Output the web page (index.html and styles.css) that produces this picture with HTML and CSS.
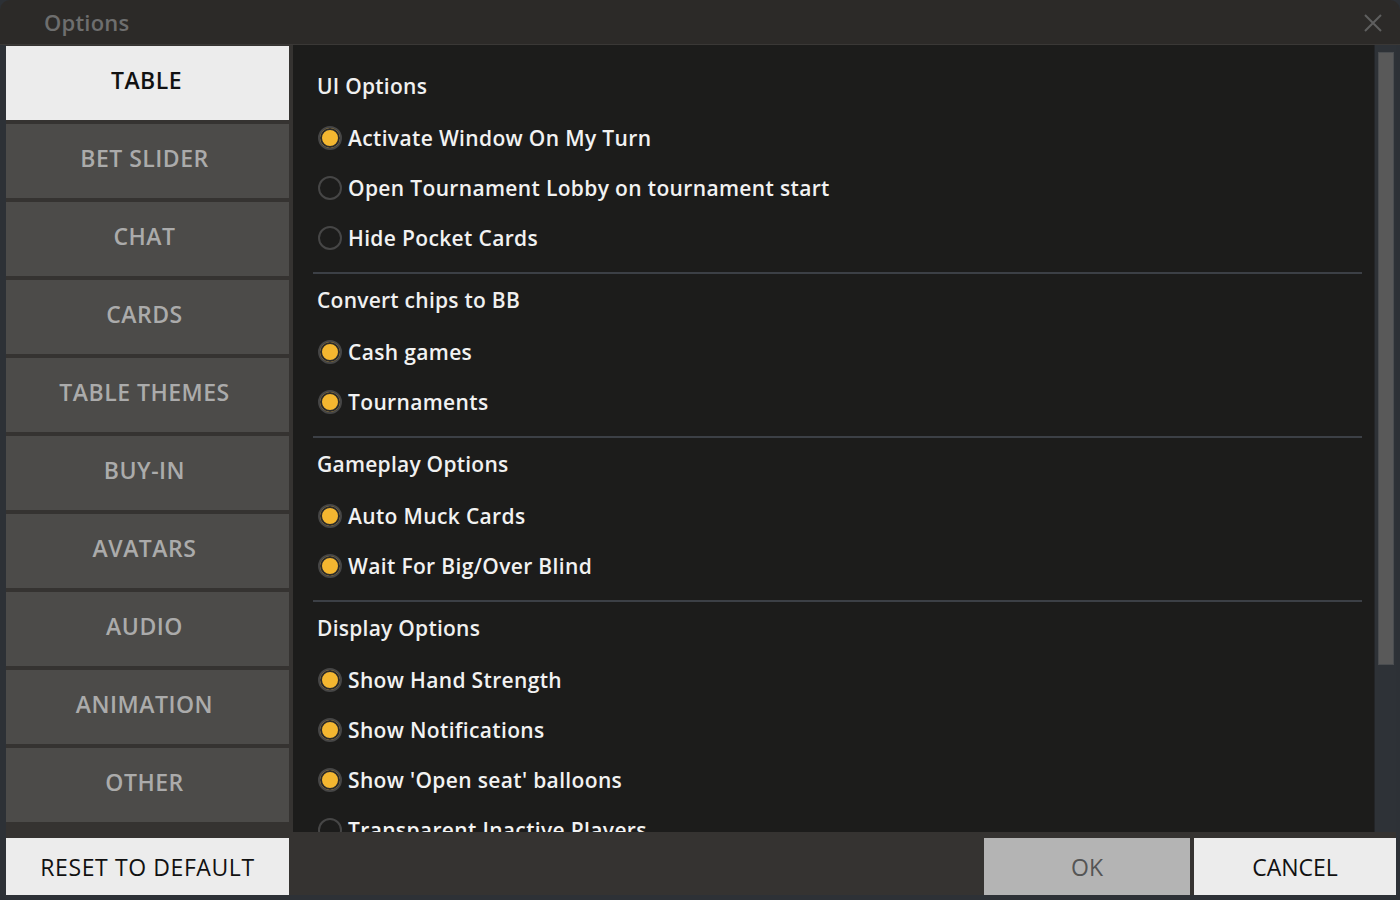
FILE: index.html
```html
<!DOCTYPE html>
<html lang="en">
<head>
  <meta charset="UTF-8" />
  <title>Options</title>
  <link rel="stylesheet" href="styles.css">
</head>
<body>
  <div class="window">
    <div class="titlebar">
      <span class="title">Options</span>
      <svg class="close" width="20" height="20" viewBox="0 0 20 20">
        <path d="M2 2 L18 18 M18 2 L2 18" stroke="#5f5f5f" stroke-width="2" fill="none" />
      </svg>
    </div>

    <div class="panel">
      <div class="top">
        <nav class="sidebar">
          <a class="tab active">TABLE</a>
          <a class="tab">BET SLIDER</a>
          <a class="tab">CHAT</a>
          <a class="tab">CARDS</a>
          <a class="tab">TABLE THEMES</a>
          <a class="tab">BUY-IN</a>
          <a class="tab">AVATARS</a>
          <a class="tab">AUDIO</a>
          <a class="tab">ANIMATION</a>
          <a class="tab">OTHER</a>
        </nav>

        <main class="content">
          <section class="group">
            <h2>UI Options</h2>
            <label class="opt"><span class="radio on"></span>Activate Window On My Turn</label>
            <label class="opt"><span class="radio"></span>Open Tournament Lobby on tournament start</label>
            <label class="opt"><span class="radio"></span>Hide Pocket Cards</label>
          </section>
          <hr />
          <section class="group">
            <h2>Convert chips to BB</h2>
            <label class="opt"><span class="radio on"></span>Cash games</label>
            <label class="opt"><span class="radio on"></span>Tournaments</label>
          </section>
          <hr />
          <section class="group">
            <h2>Gameplay Options</h2>
            <label class="opt"><span class="radio on"></span>Auto Muck Cards</label>
            <label class="opt"><span class="radio on"></span>Wait For Big/Over Blind</label>
          </section>
          <hr />
          <section class="group">
            <h2>Display Options</h2>
            <label class="opt"><span class="radio on"></span>Show Hand Strength</label>
            <label class="opt"><span class="radio on"></span>Show Notifications</label>
            <label class="opt"><span class="radio on"></span>Show 'Open seat' balloons</label>
            <label class="opt"><span class="radio"></span>Transparent Inactive Players</label>
          </section>
        </main>

        <div class="scrollbar"><div class="thumb"></div></div>
      </div>

      <div class="footer">
        <button class="btn light reset">RESET TO DEFAULT</button>
        <div class="spacer"></div>
        <button class="btn ok">OK</button>
        <button class="btn light cancel">CANCEL</button>
      </div>
    </div>
  </div>
</body>
</html>
```

FILE: styles.css
```css
body {
  margin: 0;
  background-color: #2c3035;
  font-family: "Open Sans", "DejaVu Sans", sans-serif;
}

.window {
  width: 1400px;
  height: 900px;
  border-radius: 10px;
  overflow: hidden;
  background-color: #2d3136;
  display: flex;
  flex-direction: column;
}

.titlebar {
  height: 44px;
  border-bottom: 1px solid #3a3836;
  background-color: #2c2a28;
  display: flex;
  align-items: center;
  justify-content: space-between;
  padding: 0 17px 0 44px;
}

.title {
  color: #6e6e6e;
  font-size: 22px;
  font-weight: 600;
  letter-spacing: 0.2px;
}

.close {
  margin-top: 1px;
}

.panel {
  flex: 1;
  margin: 0 4px 5px 6px;
  background-color: #353331;
  display: flex;
  flex-direction: column;
  min-height: 0;
}

.top {
  display: flex;
  height: 787px;
}

.sidebar {
  width: 283px;
  padding-top: 1px;
  display: flex;
  flex-direction: column;
  gap: 4px;
  margin-right: 4px;
}

.tab {
  height: 74px;
  box-sizing: border-box;
  padding: 0 6px 6px 0;
  background-color: #4c4b49;
  color: #ababab;
  font-size: 23px;
  font-weight: 600;
  letter-spacing: 0.5px;
  display: flex;
  align-items: center;
  justify-content: center;
}

.tab.active {
  background-color: #ececec;
  color: #111;
  padding-right: 2px;
}

.content {
  flex: 1;
  background-color: #1c1c1b;
  padding: 26px 12px 0 24px;
  overflow: hidden;
}

.group h2 {
  margin: 0 0 12px 0;
  height: 30px;
  line-height: 30px;
  font-size: 21px;
  font-weight: 600;
  letter-spacing: 0.25px;
  color: #f0f0f0;
}

.opt {
  height: 50px;
  display: flex;
  align-items: center;
  gap: 6px;
  color: #f2f2f2;
  font-size: 21px;
  font-weight: 600;
  letter-spacing: 0.35px;
}

.radio {
  width: 20px;
  height: 20px;
  margin-left: 1px;
  border-radius: 50%;
  border: 2px solid #464646;
  background-color: #1c1c1b;
  box-sizing: content-box;
}

.radio.on {
  background-color: #f4b730;
  box-shadow: inset 0 0 0 2px #2a2a2a;
}

.content hr {
  margin: 9px 0 11px -4px;
  border: none;
  height: 2px;
  background-color: #3c4046;
}

.scrollbar {
  width: 22px;
  background-color: #2e3237;
  border-left: 1px solid #232528;
  box-sizing: border-box;
  padding: 7px 2px 0 3px;
}

.thumb {
  height: 611px;
  background-color: #595959;
  border: 1px solid #4a4d50;
}

.footer {
  flex: 1;
  display: flex;
  align-items: flex-end;
  padding-top: 6px;
}

.btn {
  height: 57px;
  border: none;
  font-family: inherit;
  font-size: 23px;
  font-weight: 500;
  padding: 0;
}

.btn.light {
  background-color: #ececec;
  color: #111;
}

.reset {
  width: 283px;
  letter-spacing: 0.6px;
}

.spacer {
  flex: 1;
}

.ok {
  width: 206px;
  margin-right: 4px;
  background-color: #b4b4b4;
  color: #555;
}

.cancel {
  width: 202px;
}
```
